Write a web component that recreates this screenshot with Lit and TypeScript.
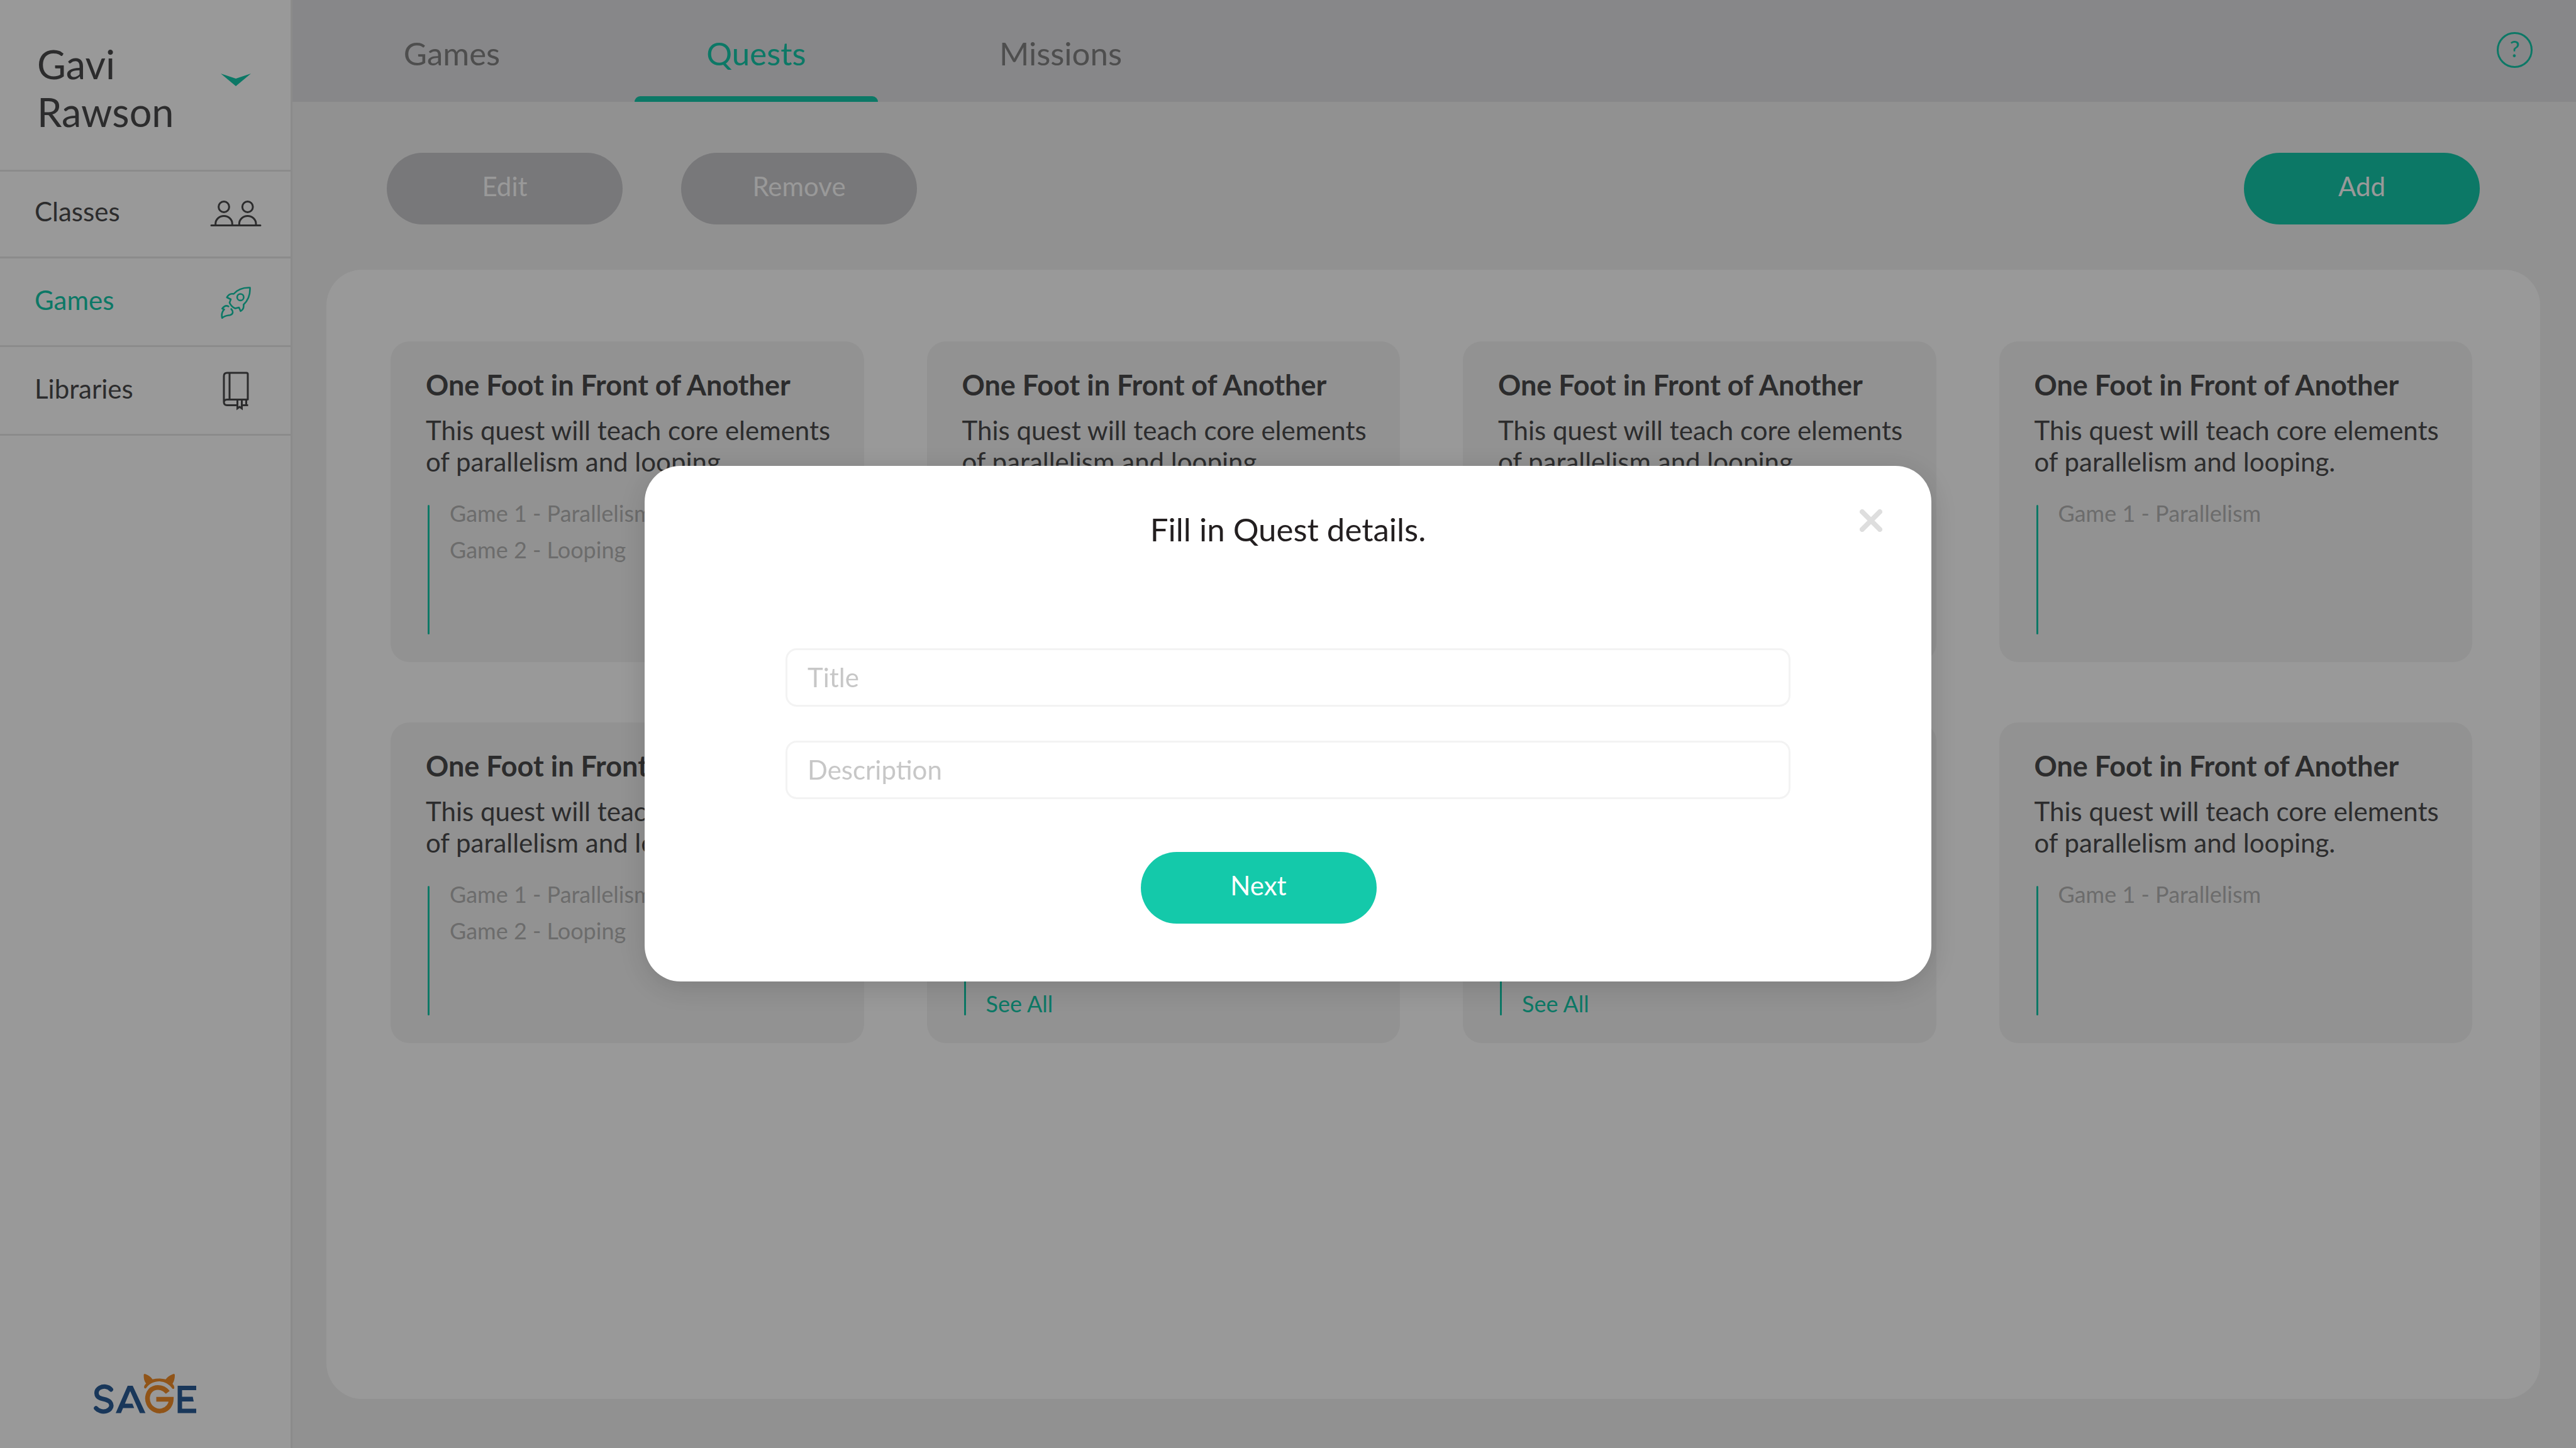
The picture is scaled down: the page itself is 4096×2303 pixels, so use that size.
import { LitElement, html, css, svg } from "lit";
import { customElement, state } from "lit/decorators.js";

interface Quest {
  title: string;
  summary: string;
  games: string[];
  more: boolean;
}

const quest = (games: string[], more = false): Quest => ({
  title: "One Foot in Front of Another",
  summary: "This quest will teach core elements of parallelism and looping.",
  games,
  more,
});

const two = ["Game 1 - Parallelism", "Game 2 - Looping"];
const three = [...two, "Game 3 - Looping"];
const one = ["Game 1 - Parallelism"];

const quests: Quest[] = [
  quest(two), quest(three, true), quest(three, true), quest(one),
  quest(two), quest(three, true), quest(three, true), quest(one),
];

const peopleIcon = svg`<svg class="icon people" viewBox="0 0 82 42" aria-hidden="true">
  <g fill="none" stroke="currentColor" stroke-width="3" stroke-linecap="round">
    <circle cx="22" cy="10" r="8.4"/><circle cx="59.7" cy="10" r="8.4"/>
    <path d="M8.7 38.500V37a13.300 12.500 0 0 1 26.600 0V38.500M46.400 38.500V37a13.300 12.500 0 0 1 26.600 0V38.500M2 39.500H80"/>
  </g></svg>`;

const rocketIcon = svg`<svg class="icon rocket" viewBox="0 0 48 51" aria-hidden="true">
  <g fill="none" stroke="currentColor" stroke-width="2.600" stroke-linecap="round" stroke-linejoin="round">
    <path d="M46.500 1.500C36 1 26.500 4.500 20.500 11.500C16 10.500 12 13 9.800 17L16 20L14 25.500C16 30 19.500 33 23 34.500L29 33L31.500 38.800C35 37 37 34 36.300 28.500C43.500 21.500 47 12 46.500 1.500Z"/>
    <circle cx="31.300" cy="16.700" r="5.200"/>
    <path d="M12.300 31.300C9.500 29.500 6 30 2.300 34.800L5.500 36.200C1.500 40.500 1 45 2.200 49.700C6 46 10 46 14.500 45.300C19.500 44 20.500 39.500 16.700 35.500"/>
  </g></svg>`;

const bookIcon = svg`<svg class="icon book" viewBox="0 0 42 62" aria-hidden="true">
  <g fill="none" stroke="currentColor" stroke-width="3" stroke-linejoin="round">
    <path d="M40 45.500V4Q40 2 38 2H7Q2 2 2 7V48.500Q2 53.500 7 53.500H22.500M31 53.500H40.500M40 44.500H7Q2 44.500 2 49M11 2V44.500M37.500 44.500V53.500"/>
  </g>
  <path d="M23.500 44.500V58.500L27 56L30.500 58.500V44.500" fill="none" stroke="currentColor" stroke-width="3"/></svg>`;

const logo = svg`<svg class="mark" viewBox="0 0 164 64" role="img" aria-label="SAGE">
  <g fill="none" stroke="#2a5d96" stroke-width="7">
    <path stroke-linecap="round" d="M27.500 25C23 19.500 15 19.300 9.500 22.300C2.500 26.300 3 35.500 10 38.500C15 40.800 22 40.300 26 45C30.500 50.500 27 57.500 20 59.300C13.500 61 7 58.800 3.700 54.700"/>
  </g>
  <path fill="#2a5d96" d="M35 62.500L54 19H62L82.300 62.500H73.500L58 27.500L47.700 52L43.300 62.500ZM49 47.500H61.500L64.300 54.500H46.300Z"/>
  <path fill="#2a5d96" d="M133.500 19H163V26H140.500V55.500H163V62.500H133.500ZM140 36.500H157.500L159 44H140Z"/>
  <path fill="none" stroke="#f08c28" stroke-width="7.500" d="M117.800 29.500C113 23 103.500 20 95.500 23C86.500 26.500 83 38.500 87.500 48C91.500 56.500 101.500 60.800 109.500 58.500C117.500 56.500 123 49.500 123.300 40.500H99.500"/>
  <path fill="#f08c28" d="M79.500 2C79.500 0 81 0 83 .700C87.500 2.300 91 5 93.500 8.800Q104 6 114.500 8.800C117 5 121 2.300 125.500 .700C127.500 0 129 0 129 2C129 8 127.500 12.500 125.300 16C127.500 18 128 19.500 128.200 22.500C127.500 24.300 126.500 24.500 125 23.500C115 8.500 94 8.500 83.500 22.500C82 24 81 23.500 80 21.500C80.300 18.500 81.500 17 83.300 15.500C80.500 12 79.500 8 79.500 2Z"/>
</svg>`;

@customElement("app-root")
export class AppRoot extends LitElement {
  @state() private section = "Games";
  @state() private tab = "Quests";

  static styles = css`
    :host {
      display: block;
      --accent: #14c9aa;
      --ink: #4a4a4b;
      font-family: Lato, "Liberation Sans", sans-serif;
      font-size: 42px;
      line-height: 50px;
      color: var(--ink);
    }
    * { box-sizing: border-box; }
    h1, h2, p, ul { margin: 0; padding: 0; font-weight: 400; }
    ul { list-style: none; }
    button, input { font: inherit; color: inherit; margin: 0; }
    button { border: 0; background: none; cursor: pointer; padding: 0; }
    a { color: inherit; text-decoration: none; }

    .page { display: flex; min-height: 100vh; background: #f2f2f2; }

    .side {
      display: flex;
      flex-direction: column;
      flex: 0 0 465px;
      background: #fff;
      border-right: 3px solid #e8e8e8;
    }
    .user {
      display: flex;
      align-items: flex-start;
      justify-content: space-between;
      height: 273px;
      padding: 64px 63px 0 59px;
      border-bottom: 3px solid #e8e8e8;
    }
    .name { width: 240px; font-size: 63px; line-height: 76px; }
    .toggle { padding-top: 53px; }
    .chevron { display: block; width: 48px; height: 20px; fill: var(--accent); }
    .entry {
      display: flex;
      align-items: flex-end;
      justify-content: space-between;
      height: 141px;
      padding: 0 45px 26px 55px;
      border-bottom: 3px solid #e8e8e8;
    }
    .item:first-child .entry { height: 138px; }
    .entry.on { color: var(--accent); }
    .label { padding-bottom: 21px; }
    .slot { display: flex; align-items: center; justify-content: center; width: 84px; height: 84px; }
    .icon { display: block; }
    .people { width: 82px; height: 42px; }
    .rocket { width: 48px; height: 51px; }
    .book { width: 42px; height: 62px; }
    .brand { margin: auto auto 54px; }
    .mark { display: block; width: 164px; height: 64px; }

    .main { display: flex; flex-direction: column; flex: 1; min-width: 0; }
    .top {
      display: flex;
      justify-content: space-between;
      height: 162px;
      padding: 0 69px 0 60px;
      background: #e1e1e4;
    }
    .tabs { display: flex; gap: 97px; }
    .tabbox {
      display: flex;
      flex-direction: column;
      justify-content: space-between;
      width: 387px;
      padding-top: 55px;
    }
    .tab { font-size: 51px; line-height: 60px; color: #838383; }
    .tab.on { color: var(--accent); }
    .bar { height: 9px; border-radius: 9px 9px 0 0; }
    .on + .bar { background: var(--accent); }
    .help {
      width: 57px;
      height: 57px;
      margin-top: 51px;
      padding-bottom: 5px;
      border: 3px solid var(--accent);
      border-radius: 50%;
      color: var(--accent);
      font-size: 36px;
      line-height: 46px;
    }

    .tools { display: flex; gap: 93px; padding: 81px 153px 72px 150px; }
    .pill {
      width: 375px;
      height: 114px;
      padding-bottom: 8px;
      border-radius: 57px;
      color: #fff;
      background: var(--accent);
    }
    .pill.off { background: #c8c8cb; }
    .tools .last { margin-left: auto; }

    .panel {
      flex: 1;
      margin: 0 57px 78px 54px;
      padding: 114px 108px 96px 102px;
      border-radius: 57px;
      background: #fff;
    }
    .grid { display: grid; grid-template-columns: repeat(4, 1fr); gap: 96px 100px; }
    .card { height: 510px; padding: 42px 48px 0 56px; border-radius: 30px; background: #f4f4f4; }
    .title { font-size: 45px; line-height: 54px; font-weight: 700; }
    .summary { margin-top: 20px; }
    .games { display: flex; gap: 32px; height: 206px; margin: 44px 0 0 3px; }
    .rule { width: 3px; border-radius: 3px; background: var(--accent); }
    .list { margin-top: -16px; font-size: 36px; line-height: 58px; color: #b4b4b4; }
    .all { color: var(--accent); }

    .shade {
      position: fixed;
      inset: 0;
      display: flex;
      align-items: flex-start;
      justify-content: center;
      padding-top: 741px;
      background: rgba(0, 0, 0, 0.4);
    }
    .modal {
      position: relative;
      display: flex;
      flex-direction: column;
      width: calc(50% - 2px);
      padding: 71px 224px 92px;
      border-radius: 57px;
      background: #fff;
      box-shadow: 0 9px 48px rgba(0, 0, 0, 0.16);
    }
    .heading { text-align: center; font-size: 51px; line-height: 60px; color: #231f20; }
    .close { position: absolute; top: 69px; right: 78px; width: 36px; height: 36px; }
    .close svg { display: block; width: 36px; height: 36px; }
    .form { display: flex; flex-direction: column; gap: 54px; margin-top: 159px; }
    .field {
      width: 100%;
      height: 93px;
      padding: 0 32px 2px;
      border: 3px solid #f3f3f3;
      border-radius: 18px;
      background: #fff;
    }
    .field::placeholder { color: #c7c7c7; opacity: 1; }
    .next { align-self: center; margin: 30px 94px 0 0; }
  `;

  private navItem(label: string, icon: unknown) {
    return html`<li class="item"><a class="entry ${this.section === label ? "on" : ""}" href="#${label.toLowerCase()}"
      @click=${() => (this.section = label)}><span class="label">${label}</span><span class="slot">${icon}</span></a></li>`;
  }

  private card(q: Quest) {
    return html`<article class="card">
      <h2 class="title">${q.title}</h2>
      <p class="summary">${q.summary}</p>
      <div class="games">
        <span class="rule"></span>
        <ul class="list">
          ${q.games.map((g) => html`<li>${g}</li>`)}
          ${q.more ? html`<li><a class="all" href="#all">See All</a></li>` : ""}
        </ul>
      </div>
    </article>`;
  }

  render() {
    return html`<div class="page">
      <aside class="side">
        <div class="user">
          <span class="name">Gavi Rawson</span>
          <button class="toggle" aria-label="Account menu">
            <svg class="chevron" viewBox="0 0 48 20"><path d="M0 0L24 8L48 0L24 20Z"/></svg>
          </button>
        </div>
        <nav><ul>
          ${this.navItem("Classes", peopleIcon)}
          ${this.navItem("Games", rocketIcon)}
          ${this.navItem("Libraries", bookIcon)}
        </ul></nav>
        <div class="brand">${logo}</div>
      </aside>
      <main class="main">
        <header class="top">
          <div class="tabs">
            ${["Games", "Quests", "Missions"].map((t) => html`<div class="tabbox">
              <button class="tab ${this.tab === t ? "on" : ""}" @click=${() => (this.tab = t)}>${t}</button>
              <span class="bar"></span></div>`)}
          </div>
          <button class="help" aria-label="Help">?</button>
        </header>
        <div class="tools">
          <button class="pill off">Edit</button>
          <button class="pill off">Remove</button>
          <button class="pill last">Add</button>
        </div>
        <section class="panel"><div class="grid">${quests.map((q) => this.card(q))}</div></section>
      </main>
      <div class="shade">
        <div class="modal" role="dialog" aria-labelledby="heading">
          <h1 class="heading" id="heading">Fill in Quest details.</h1>
          <button class="close" aria-label="Close">
            <svg viewBox="0 0 36 36"><path d="M4 4L32 32M32 4L4 32" stroke="#dedede" stroke-width="8" stroke-linecap="round"/></svg>
          </button>
          <div class="form">
            <input class="field" aria-label="Title" placeholder="Title">
            <input class="field" aria-label="Description" placeholder="Description">
            <button class="pill next">Next</button>
          </div>
        </div>
      </div>
    </div>`;
  }
}
